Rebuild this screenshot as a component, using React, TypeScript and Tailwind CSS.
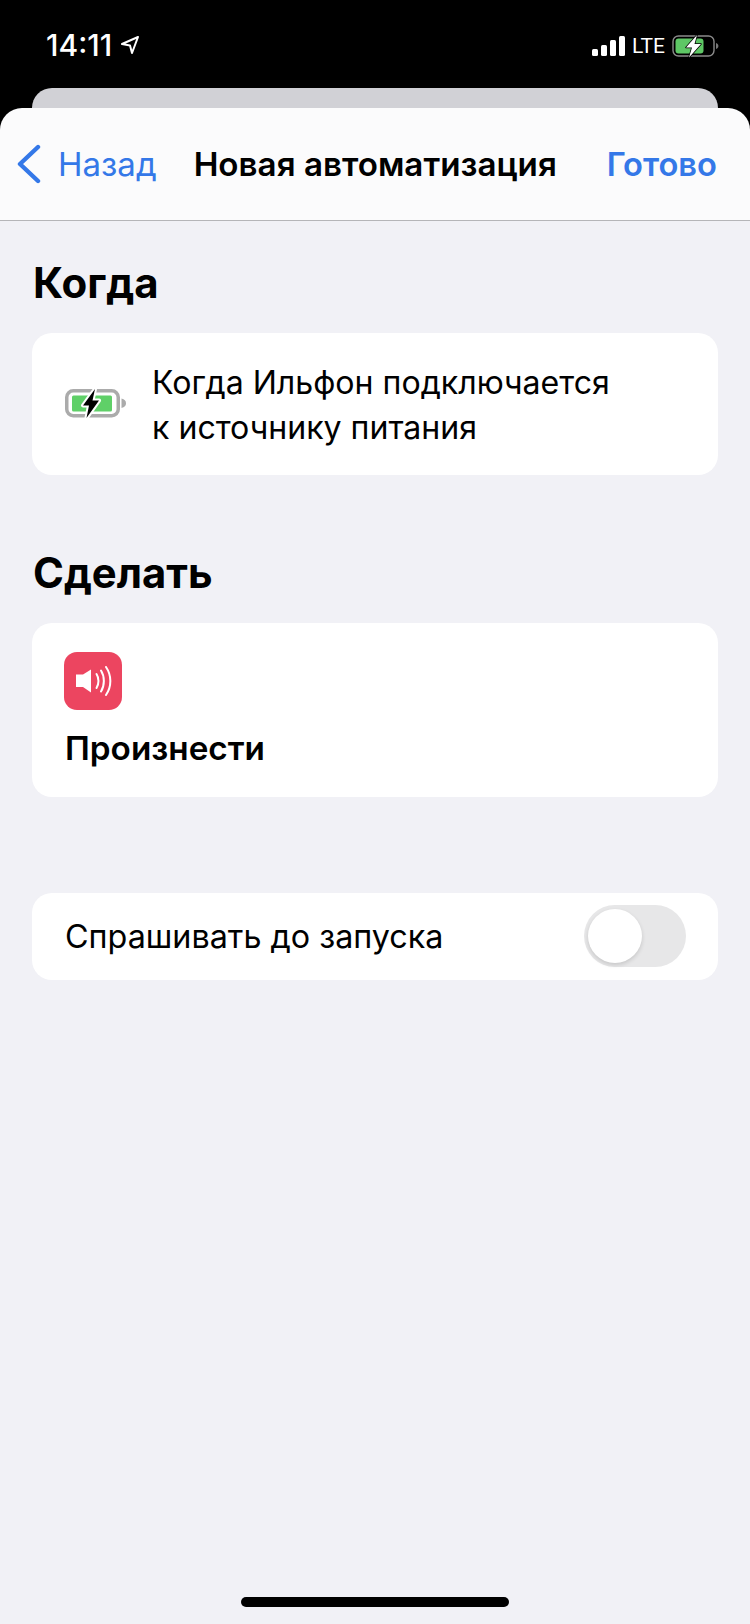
function StatusBar() {
  return (
    <div className="h-[88px] flex items-start justify-between pt-[30px] pl-[46px] pr-[30px] text-white">
      <div className="flex items-center gap-[8px]">
        <span className="text-[30px] leading-[30px] font-medium">14:11</span>
        <svg width="20" height="20" viewBox="0 0 20 20" fill="none" stroke="white" strokeWidth="2" strokeLinejoin="round">
          <path d="M18 2 2 9l8 1.500L12 18z" />
        </svg>
      </div>
      <div className="flex items-center h-[30px] mt-[1px]">
        <div className="flex items-end gap-[3px] h-[20px]">
          <div className="w-[6px] h-[7px] rounded-[1.5px] bg-white" />
          <div className="w-[6px] h-[11px] rounded-[1.5px] bg-white" />
          <div className="w-[6px] h-[16px] rounded-[1.5px] bg-white" />
          <div className="w-[6px] h-[20px] rounded-[1.5px] bg-white" />
        </div>
        <span className="ml-[7px] w-[33px] font-['Roboto',sans-serif] text-[21px] leading-[30px]">LTE</span>
        <svg className="ml-[7px]" width="48" height="24" viewBox="0 0 48 24" fill="none">
          <rect x="1" y="2" width="41" height="20" rx="5.500" stroke="#8a8a8a" strokeWidth="1.400" />
          <rect x="3.500" y="4.500" width="28" height="15" rx="3" fill="#5ec765" />
          <path d="M44 9c1.600.5 2.400 1.600 2.400 3s-.8 2.500-2.400 3z" fill="#777" />
          <path d="M25 1 14 13.500h6L17 23.500l12-13.500h-6.500z" fill="white" stroke="black" strokeWidth="1.500" strokeLinejoin="round" paintOrder="stroke" />
        </svg>
      </div>
    </div>
  )
}

function NavBar() {
  return (
    <div className="h-[113px] rounded-t-[22px] bg-[#fbfbfc] border-b border-[#b5b5b8] flex items-center pl-[16px] pr-[33px]">
      <div className="flex items-center gap-[16px] text-[#3478e8]">
        <svg width="26" height="40" viewBox="0 0 26 40" fill="none" stroke="#3478e8" strokeWidth="4.400" strokeLinecap="round" strokeLinejoin="round">
          <path d="M22 3 4 20l18 17" />
        </svg>
        <span className="text-[33px] leading-[40px]">Назад</span>
      </div>
      <span className="ml-[37px] text-[33.200px] leading-[40px] font-semibold text-black">Новая автоматизация</span>
      <span className="ml-auto text-[32.700px] leading-[40px] font-semibold text-[#3478e8]">Готово</span>
    </div>
  )
}

function SpeakerIcon() {
  return (
    <div className="w-[58px] h-[58px] rounded-[13px] bg-[#ec4560] flex items-center justify-center">
      <svg className="ml-[1px]" width="36" height="30" viewBox="0 0 36 30" fill="none">
        <path d="M0 8.500h7L15 3.500v23l-8-5.500H0z" fill="white" />
        <path d="M20.500 8c2.600 4 2.600 10 0 14" stroke="white" strokeWidth="2" strokeLinecap="round" />
        <path d="M25 4.500c3.800 6 3.800 15 0 21" stroke="white" strokeWidth="2" strokeLinecap="round" />
        <path d="M30 1c5.800 8.500 5.800 19.500 0 28" stroke="white" strokeWidth="2" strokeLinecap="round" />
      </svg>
    </div>
  )
}

function BatteryIcon() {
  return (
    <svg width="64" height="32" viewBox="0 0 64 32" fill="none">
      <rect x="2.750" y="2.750" width="51.500" height="25" rx="6.500" stroke="#ababab" strokeWidth="3.500" />
      <rect x="8" y="7.500" width="40" height="16" rx="1.500" fill="#5fd068" />
      <path d="M57.500 10.500c3 .6 4.500 2.300 4.500 4.750s-1.500 4.150-4.500 4.750z" fill="#ababab" />
      <path d="M31 1 19 17.500h6L22.500 30 35 12.500h-6.500z" fill="black" stroke="white" strokeWidth="4" strokeLinejoin="round" paintOrder="stroke" />
    </svg>
  )
}

export default function App() {
  return (
    <div className="w-[750px] h-[1624px] bg-black overflow-hidden font-['Inter',sans-serif]">
      <StatusBar />
      <div className="mx-[32px] h-[20px] rounded-t-[20px] bg-[#d1d1d6]" />
      <NavBar />
      <div className="h-[1403px] bg-[#f1f1f6] flex flex-col px-[32px]">
        <h2 className="mt-[37px] ml-[1px] text-[42px] leading-[50px] font-bold text-black">Когда</h2>
        <div className="mt-[25px] h-[142px] rounded-[20px] bg-white flex items-center gap-[24px] pl-[32px]">
          <BatteryIcon />
          <p className="pt-[1px] text-[32.100px] leading-[45px] text-black">
            Когда Ильфон подключается
            <br />к источнику питания
          </p>
        </div>
        <h2 className="mt-[73px] ml-[1px] text-[41.800px] leading-[50px] font-bold text-black">Сделать</h2>
        <div className="mt-[25px] h-[174px] rounded-[20px] bg-white pl-[32px] pt-[29px]">
          <SpeakerIcon />
          <p className="mt-[18px] ml-[1px] text-[33.300px] leading-[40px] font-semibold text-black">Произнести</p>
        </div>
        <div className="mt-[96px] h-[87px] rounded-[20px] bg-white flex items-center justify-between pl-[33px] pr-[32px] pb-[1px]">
          <span className="pt-[2px] text-[32.300px] leading-[40px] text-black">Спрашивать до запуска</span>
          <div className="w-[102px] h-[62px] rounded-full bg-[#e7e7e8] p-[4px]">
            <div className="w-[54px] h-[54px] rounded-full bg-white shadow-[0_2px_4px_rgba(0,0,0,0.14)]" />
          </div>
        </div>
        <div className="mt-auto mb-[17px] mx-auto w-[268px] h-[10px] rounded-full bg-black" />
      </div>
    </div>
  )
}
